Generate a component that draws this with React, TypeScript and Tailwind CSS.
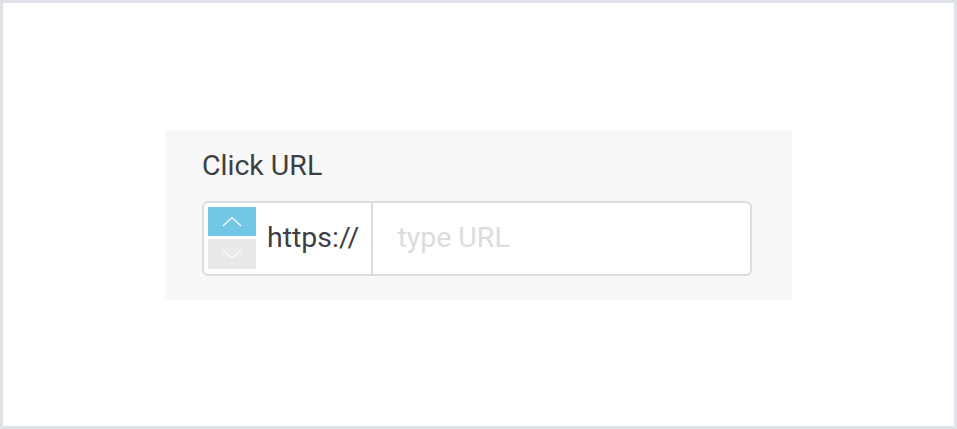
const font = { fontFamily: "Roboto, 'Noto Sans', sans-serif" };

function Spinner() {
  return (
    <div className="flex w-[48px] shrink-0 flex-col gap-[3px]">
      <button className="flex h-[29px] items-center justify-center bg-[#72c6e6]">
        <svg width="20" height="11" viewBox="0 0 20 11" fill="none">
          <path d="M1 10 L10 1.5 L19 10" stroke="#ffffff" strokeWidth="1.2" />
        </svg>
      </button>
      <button className="flex h-[30px] items-center justify-center bg-[#e9e9e9]">
        <svg width="20" height="11" viewBox="0 0 20 11" fill="none">
          <path d="M1 1 L10 9.5 L19 1" stroke="#ffffff" strokeWidth="1.2" />
        </svg>
      </button>
    </div>
  );
}

export default function App() {
  return (
    <div
      className="flex h-[429px] w-[957px] items-center justify-center border-[3px] border-[#dfe3e8] bg-white"
      style={font}
    >
      <div className="flex h-[170px] w-[627px] flex-col bg-[#f8f8f8] pl-[37px] pt-[19px]">
        <label className="text-[28.5px] leading-[34px] text-[#3d4043]">Click URL</label>
        <div className="mt-[18px] flex h-[75px] w-[550px] items-stretch rounded-[6px] border-2 border-[#d9dce1] bg-white">
          <div className="flex items-center pl-[4px]">
            <Spinner />
          </div>
          <div className="flex items-center border-r-2 border-[#d9dce1] pl-[11px] pr-[12px] text-[28.5px] text-[#3d4043]">
            https://
          </div>
          <input
            className="min-w-0 flex-1 bg-transparent pl-[24px] text-[28.5px] text-[#3d4043] outline-none placeholder:text-[#dcdcdc]"
            placeholder="type URL"
          />
        </div>
      </div>
    </div>
  );
}
